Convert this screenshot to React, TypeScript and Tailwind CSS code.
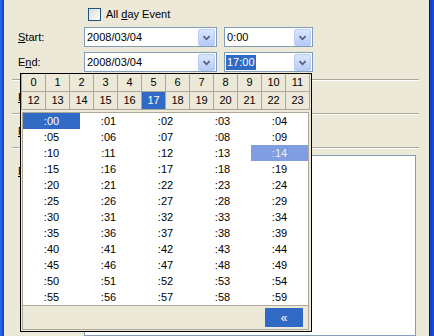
import React from "react";

function Chevron() {
  return (
    <svg width="17" height="17" viewBox="0 0 17 17">
      <polyline points="5,7 8.5,10.5 12,7" fill="none" stroke="#4D6185" strokeWidth="2" />
    </svg>
  );
}

function Combo({ className, value, selected }: { className: string; value: string; selected?: boolean }) {
  return (
    <div className={"h-[20px] border border-[#7F9DB9] bg-white flex items-center justify-between " + className}>
      <div className="pl-[1px] flex items-center h-full">
        {selected ? (
          <span className="bg-[#316AC5] text-white leading-[15px] px-[1px]">{value}</span>
        ) : (
          <span className="pl-[1px] leading-[14px]">{value}</span>
        )}
      </div>
      <div className="w-[17px] h-[17px] mr-[1px] rounded-[2px] border border-[#B9CCF6] bg-gradient-to-b from-[#DCE6FD] to-[#B7CBF8] flex items-center justify-center">
        <Chevron />
      </div>
    </div>
  );
}

function Sep() {
  return (
    <div className="ml-[8px] w-[407px] h-[2px] flex flex-col">
      <div className="h-[1px] bg-[#ACA899]" />
      <div className="h-[1px] bg-white" />
    </div>
  );
}

export default function App() {
  const hours = Array.from({ length: 24 }, (_, i) => i);
  const mins = Array.from({ length: 60 }, (_, i) => i);
  return (
    <div className="w-[434px] h-[336px] overflow-hidden bg-[#ECE9D8] flex relative font-['Liberation_Sans',Arial,sans-serif] text-[11px] text-black">
      <div className="w-[4px] h-full bg-gradient-to-r from-[#2D6AE8] to-[#0A3FC8]" />
      <div className="flex-1 flex flex-col">
        <div className="h-[27px] pt-[8px] pl-[84px] flex items-start">
          <div className="w-[13px] h-[13px] border border-[#1C5180] bg-gradient-to-br from-[#DCDCD5] to-white" />
          <span className="ml-[5px] leading-[13px]">
            All <span className="underline">d</span>ay Event
          </span>
        </div>
        <div className="h-[20px] flex items-center">
          <div className="w-[80px] pl-[14px]">
            <span className="underline">S</span>tart:
          </div>
          <Combo className="w-[133px]" value="2008/03/04" />
          <Combo className="w-[89px] ml-[7px]" value="0:00" />
        </div>
        <div className="h-[20px] mt-[5px] flex items-center">
          <div className="w-[80px] pl-[14px]">
            E<span className="underline">n</span>d:
          </div>
          <Combo className="w-[133px]" value="2008/03/04" />
          <Combo className="w-[89px] ml-[7px]" value="17:00" selected />
        </div>
        <div className="h-[7px]" />
        <Sep />
        <div className="h-[32px] pl-[14px] flex items-center">
          <span className="underline">F</span>
        </div>
        <Sep />
        <div className="h-[32px] pl-[14px] flex items-center">
          <span className="underline">R</span>
        </div>
        <Sep />
        <div className="flex pt-[6px]">
          <div className="w-[80px] pl-[14px] pt-[8px]">
            <span className="underline">D</span>
          </div>
          <div className="w-[332px] h-[181px] border border-[#7F9DB9] bg-white" />
        </div>
      </div>
      <div className="w-[5px] h-full border-l border-[#001A8C] bg-gradient-to-r from-[#0A3FCC] to-[#1650E0]" />

      <div className="absolute left-[20px] top-[73px] w-[292px] h-[259px] border border-black bg-[#ECE9D8] flex flex-col">
        <div className="grid grid-cols-[repeat(12,24px)] w-[289px] border-l border-[#ACA899]">
          {hours.map((h) => (
            <div
              key={h}
              className={
                "h-[18px] border-r border-b border-[#ACA899] flex items-center justify-center " +
                (h === 17 ? "bg-[#316AC5] text-white" : "")
              }
            >
              {h}
            </div>
          ))}
        </div>
        <div className="ml-[1px] mt-[2px] w-[287px] h-[218px] border border-[#ACA899] flex flex-col">
          <div className="grid grid-cols-5 bg-white border-b border-[#ACA899]">
            {mins.map((m) => (
              <div
                key={m}
                className={
                  "h-[16px] flex items-center justify-center " +
                  (m === 0 ? "bg-[#316AC5] text-white" : m === 14 ? "bg-[#7F9DE0] text-[#F0F0F0]" : "")
                }
              >
                :{m < 10 ? "0" + m : m}
              </div>
            ))}
          </div>
          <div className="flex-1 flex items-start justify-end pt-[2px] pr-[5px]">
            <div className="w-[38px] h-[19px] bg-[#316AC5] text-white flex items-center justify-center text-[12px] font-light leading-none">
              «
            </div>
          </div>
        </div>
      </div>
    </div>
  );
}
